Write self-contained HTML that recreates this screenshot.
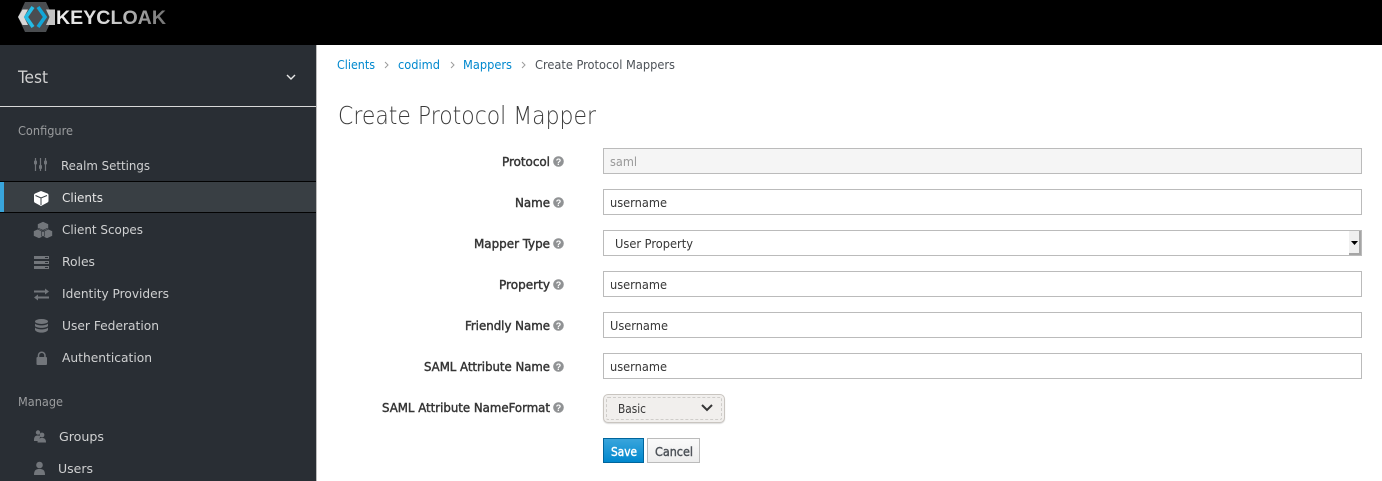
<!DOCTYPE html>
<html lang="en">
<head>
<meta charset="utf-8">
<title>Create Protocol Mapper</title>
<style>
html,body{margin:0;padding:0;width:1382px;height:481px;overflow:hidden;background:#fff}
.b{position:absolute;box-sizing:border-box}
.in{left:603px;width:759px;height:26px;border:1px solid #bbb;background:#fff}
svg.o{position:absolute;left:0;top:0}
text{font-family:"DejaVu Sans Condensed","DejaVu Sans","Liberation Sans",sans-serif;font-size:12.6px}
.s{fill:#cfd0d1}
.h{fill:#9a9c9e}
.l{fill:#363636;stroke:#363636;stroke-width:.42px;font-size:12.4px}
.v{fill:#363636}
.a{fill:#0088ce}
.c{fill:#4d5258}
.q circle{fill:#909294}
.q text{fill:#fff;font-size:9px;font-weight:bold;font-family:"Liberation Sans",sans-serif}
.i{fill:#72767b}
</style>
</head>
<body>
<div class="b" style="left:0;top:0;width:1382px;height:45px;background:#000"></div>
<div class="b" style="left:0;top:45px;width:316px;height:436px;background:#292e34"></div>
<div class="b" style="left:316px;top:45px;width:1px;height:436px;background:#bbb"></div>
<div class="b" style="left:0;top:106px;width:316px;height:1px;background:#d8d8d8"></div>
<div class="b" style="left:0;top:181px;width:316px;height:32px;background:#393f44;border-top:1px solid #030303;border-bottom:1px solid #030303"></div>
<div class="b" style="left:0;top:182px;width:4px;height:30px;background:#39a5dc"></div>

<div class="b in" style="top:148px;background:#f5f5f5"></div>
<div class="b in" style="top:189px"></div>
<div class="b in" style="top:230px"></div>
<div class="b" style="left:1349px;top:231px;width:12px;height:24px;background:#f0f0f0;border-right:2px solid #a5a5a5;border-bottom:2px solid #a5a5a5"></div>
<div class="b in" style="top:271px"></div>
<div class="b in" style="top:312px"></div>
<div class="b in" style="top:353px"></div>
<div class="b" style="left:603px;top:394px;width:122px;height:29px;border:1px solid #c9c5c0;border-radius:5px;background:#f1efed;box-shadow:0 1px 1px #ddd"></div>
<div class="b" style="left:606px;top:397px;width:116px;height:23px;border:1px dashed #cfcdca;border-radius:2px"></div>
<div class="b" style="left:603px;top:438px;width:41px;height:25px;border:1px solid #00659c;background:linear-gradient(#39a5dc,#0088ce)"></div>
<div class="b" style="left:647px;top:438px;width:53px;height:25px;border:1px solid #bbb;background:linear-gradient(#fafafa,#ededed)"></div>

<svg class="o" width="1382" height="481" viewBox="0 0 1382 481" xmlns="http://www.w3.org/2000/svg">
<defs>
<linearGradient id="kg" x1="0" x2="1" y1="0" y2="0"><stop offset="0" stop-color="#ececec"/><stop offset=".45" stop-color="#d8d8d8"/><stop offset="1" stop-color="#737373"/></linearGradient>
</defs>
<!-- logo -->
<polygon points="25,2 46,2 53,17 46,32 25,32 18,17" fill="#4a4d50"/>
<polygon points="18,17 22.5,9.5 28,9.5 24,17 28,25 22.5,25" fill="#d8d8d8"/>
<polygon points="46,9.5 55,9.5 55,25 46,25 49.5,17" fill="#c4c4c4"/>
<path d="M33,7 L26,17 L33,27" fill="none" stroke="#25bde6" stroke-width="3.6"/>
<path d="M38,7 L45,17 L38,27" fill="none" stroke="#12a6d8" stroke-width="3.6"/>
<text x="56" y="24" textLength="110" lengthAdjust="spacingAndGlyphs" fill="url(#kg)" style="font-size:19.5px;font-family:'Liberation Sans',sans-serif;font-weight:bold">KEYCLOAK</text>

<!-- sidebar -->
<text x="18" y="83" style="font-size:17px;fill:#d1d1d1" textLength="30" lengthAdjust="spacingAndGlyphs">Test</text>
<path d="M287,75 L291,79 L295,75" fill="none" stroke="#e8e8e8" stroke-width="1.4"/>
<text class="h" x="18" y="135" textLength="55" lengthAdjust="spacingAndGlyphs">Configure</text>
<text class="h" x="18" y="406" textLength="45" lengthAdjust="spacingAndGlyphs">Manage</text>
<text class="s" x="61" y="170" textLength="89" lengthAdjust="spacingAndGlyphs">Realm Settings</text>
<text x="62" y="202" textLength="41" lengthAdjust="spacingAndGlyphs" style="fill:#e6e6e6">Clients</text>
<text class="s" x="62" y="234" textLength="81" lengthAdjust="spacingAndGlyphs">Client Scopes</text>
<text class="s" x="62" y="266" textLength="33" lengthAdjust="spacingAndGlyphs">Roles</text>
<text class="s" x="62" y="298" textLength="107" lengthAdjust="spacingAndGlyphs">Identity Providers</text>
<text class="s" x="62" y="330" textLength="97" lengthAdjust="spacingAndGlyphs">User Federation</text>
<text class="s" x="62" y="362" textLength="90" lengthAdjust="spacingAndGlyphs">Authentication</text>
<text class="s" x="59" y="441" textLength="45" lengthAdjust="spacingAndGlyphs">Groups</text>
<text class="s" x="58" y="473" textLength="35" lengthAdjust="spacingAndGlyphs">Users</text>

<!-- icons -->
<g stroke="#72767b" stroke-width="1.2" fill="none">
<path d="M35.5,158V171M40.5,158V171M45.5,158V171"/>
</g>
<g class="i"><rect x="34" y="160.5" width="3" height="4" rx="1"/><rect x="39" y="165" width="3" height="4" rx="1"/><rect x="44" y="160.5" width="3" height="4" rx="1"/></g>
<path d="M41,191 L47.5,193.5 Q48.5,194 48.5,195 V201 Q48.5,202 47.5,202.5 L41,206 L34.5,202.5 Q34,202 34,201 V195 Q34,194 35,193.5Z" fill="#fff"/>
<path d="M35.5,195.5 L41,198 L47,195.5 M41,198 V205" fill="none" stroke="#393f44" stroke-width="1"/>
<g class="i">
<path d="M43,221.5 L48.5,224 V229 L43,231.5 L37.5,229 V224Z"/>
<path d="M39,228.5 L44.5,231 V236 L39,238.5 L33.5,236 V231Z"/>
<path d="M47,228.5 L52.5,231 V236 L47,238.5 L41.5,236 V231Z"/>
</g>
<g fill="none" stroke="#292e34" stroke-width=".6">
<path d="M43,221.5 L48.5,224 V229 L43,231.5 L37.5,229 V224Z"/>
<path d="M39,228.5 L44.5,231 V236 L39,238.5 L33.5,236 V231Z"/>
<path d="M47,228.5 L52.5,231 V236 L47,238.5 L41.5,236 V231Z"/>
</g>
<g class="i">
<rect x="34" y="256" width="15" height="3"/><rect x="34" y="261" width="15" height="3"/><rect x="34" y="266" width="15" height="3"/>
<path d="M34,290.5 H45 V288.5 L49,291.5 L45,294.5 V292.5 H34Z"/><path d="M49,296.5 H38 V294.5 L34,297.5 L38,300.5 V298.5 H49Z"/>
<ellipse cx="41.5" cy="321.5" rx="6.5" ry="2.5"/>
<path d="M35,323.5 C37,326 46,326 48,323.5 V326 C46,328.5 37,328.5 35,326Z"/>
<path d="M35,327.5 C37,330 46,330 48,327.5 V330 C46,333.5 37,333.5 35,330Z"/>
<rect x="36.5" y="357" width="10.5" height="8" rx="1"/>
<path d="M38.5,358V355.5a3.2,3.2 0 0 1 6.5,0V358" fill="none" stroke="#72767b" stroke-width="1.5"/>
<circle cx="38" cy="432.5" r="2.2"/><path d="M34,440 C34,436 36,435.5 38,435.5 C39,435.5 40,436 40.5,436.5 L38,441 H34Z"/>
<circle cx="42" cy="435" r="2.4"/><path d="M37.5,442.5 C37.5,438.5 40,438 42,438 C44,438 46,438.5 46,442.5Z"/>
<circle cx="39.5" cy="465" r="3.3"/><path d="M34,475 C34,470 36,469 39.5,469 C43,469 45,470 45,475Z"/>
</g>
<g fill="#292e34"><rect x="45" y="257" width="3" height="1"/><rect x="45" y="262" width="3" height="1"/><rect x="45" y="267" width="3" height="1"/></g>

<!-- breadcrumb -->
<text class="a" x="337" y="69" textLength="38" lengthAdjust="spacingAndGlyphs">Clients</text>
<path d="M385,62 L388,65 L385,68 M451,62 L454,65 L451,68 M522,62 L525,65 L522,68" fill="none" stroke="#9c9c9c" stroke-width="1"/>
<text class="a" x="398" y="69" textLength="42" lengthAdjust="spacingAndGlyphs">codimd</text>
<text class="a" x="463" y="69" textLength="49" lengthAdjust="spacingAndGlyphs">Mappers</text>
<text class="c" x="535" y="69" textLength="140" lengthAdjust="spacingAndGlyphs">Create Protocol Mappers</text>

<text x="338" y="124" textLength="258" lengthAdjust="spacingAndGlyphs" style="font-size:25px;font-family:'DejaVu Sans Light','DejaVu Sans ExtraLight','DejaVu Sans Condensed','DejaVu Sans',sans-serif;font-weight:200;fill:#3a3a3a">Create Protocol Mapper</text>

<!-- labels -->
<text class="l" x="502" y="166" textLength="48" lengthAdjust="spacingAndGlyphs">Protocol</text>
<text class="l" x="515" y="207" textLength="35" lengthAdjust="spacingAndGlyphs">Name</text>
<text class="l" x="474" y="248" textLength="76" lengthAdjust="spacingAndGlyphs">Mapper Type</text>
<text class="l" x="499" y="289" textLength="51" lengthAdjust="spacingAndGlyphs">Property</text>
<text class="l" x="465" y="330" textLength="85" lengthAdjust="spacingAndGlyphs">Friendly Name</text>
<text class="l" x="424" y="371" textLength="126" lengthAdjust="spacingAndGlyphs">SAML Attribute Name</text>
<text class="l" x="382" y="412" textLength="168" lengthAdjust="spacingAndGlyphs">SAML Attribute NameFormat</text>

<g class="q">
<circle cx="558.5" cy="161.5" r="5.3"/><text x="558.5" y="165" text-anchor="middle">?</text>
<circle cx="558.5" cy="202.5" r="5.3"/><text x="558.5" y="206" text-anchor="middle">?</text>
<circle cx="558.5" cy="243.5" r="5.3"/><text x="558.5" y="247" text-anchor="middle">?</text>
<circle cx="558.5" cy="284.5" r="5.3"/><text x="558.5" y="288" text-anchor="middle">?</text>
<circle cx="558.5" cy="325.5" r="5.3"/><text x="558.5" y="329" text-anchor="middle">?</text>
<circle cx="558.5" cy="366.5" r="5.3"/><text x="558.5" y="370" text-anchor="middle">?</text>
<circle cx="558.5" cy="407.5" r="5.3"/><text x="558.5" y="411" text-anchor="middle">?</text>
</g>

<!-- values -->
<text x="610" y="166" textLength="27" lengthAdjust="spacingAndGlyphs" style="fill:#999">saml</text>
<text class="v" x="610" y="207" textLength="57" lengthAdjust="spacingAndGlyphs">username</text>
<text class="v" x="615" y="248" textLength="78" lengthAdjust="spacingAndGlyphs">User Property</text>
<text class="v" x="610" y="289" textLength="57" lengthAdjust="spacingAndGlyphs">username</text>
<text class="v" x="610" y="330" textLength="58" lengthAdjust="spacingAndGlyphs">Username</text>
<text class="v" x="610" y="371" textLength="57" lengthAdjust="spacingAndGlyphs">username</text>
<text class="v" x="618" y="413" textLength="28" lengthAdjust="spacingAndGlyphs">Basic</text>
<path d="M1351,241 H1358 L1354.5,245Z" fill="#000"/>
<path d="M702,405 L707,410 L712,405" fill="none" stroke="#363636" stroke-width="2"/>
<text x="611" y="456" textLength="26" lengthAdjust="spacingAndGlyphs" style="fill:#fff;stroke:#fff;stroke-width:.4px;font-size:12.4px">Save</text>
<text x="655" y="456" textLength="38" lengthAdjust="spacingAndGlyphs" style="fill:#4d5258;stroke:#4d5258;stroke-width:.4px;font-size:12.4px">Cancel</text>
</svg>
</body>
</html>
